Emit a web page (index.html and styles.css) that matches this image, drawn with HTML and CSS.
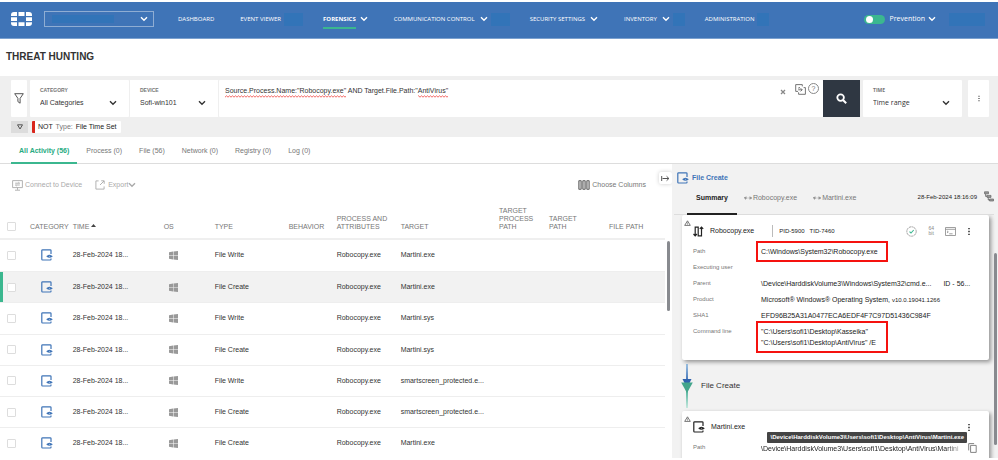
FILE: index.html
```html
<!DOCTYPE html>
<html lang="en">
<head>
    <meta charset="UTF-8">
    <meta name="viewport" content="width=device-width, initial-scale=1.0">
    <title>Threat Hunting</title>
    <link rel="stylesheet" href="styles.css">
</head>
<body>
    <svg class="sprite" aria-hidden="true">
        <symbol id="chevron" viewBox="0 0 8 6"><path d="M1 1.2l3 3 3-3" fill="none" stroke="currentColor" stroke-width="1.4"/></symbol>
        <symbol id="file" viewBox="0 0 12 12">
            <path d="M10 5V1.6a.8.8 0 0 0-.8-.8H1.6a.8.8 0 0 0-.8.8v8.6a.8.8 0 0 0 .8.8h7.6a.8.8 0 0 0 .8-.8V9.6" fill="none" stroke="currentColor" stroke-width="1.2"/>
            <path d="M5.2 7.3Q8.4 4.2 11.8 7.3Q8.4 10.4 5.2 7.3Z" fill="currentColor"/>
            <circle cx="8.5" cy="7.3" r=".5" fill="#fff" fill-opacity=".6"/>
        </symbol>
        <symbol id="windows" viewBox="0 0 9 9"><path d="M0 1.2L4 .6v3.7H0zM4.5.5L9 0v4.3H4.5zM0 4.8h4v3.6l-4-.6zM4.5 4.8H9V9l-4.5-.6z" fill="currentColor"/></symbol>
        <symbol id="dots" viewBox="0 0 4 10"><path d="M1.2 1h1.6v1.6H1.2zM1.2 4.2h1.6v1.6H1.2zM1.2 7.4h1.6V9H1.2z" fill="currentColor"/></symbol>
        <symbol id="link" viewBox="0 0 8 6"><path d="M.5 3h2.8M4.7 3h2.8M2 1.6L.6 3 2 4.4M6 1.6L7.4 3 6 4.4" fill="none" stroke="currentColor" stroke-width=".9"/></symbol>
        <symbol id="warn" viewBox="0 0 7 6"><path d="M3.5.8L6.3 5.4H.7z" fill="none" stroke="currentColor" stroke-width=".8"/><path d="M3.5 2.4v1.4M3.5 4.2v.6" stroke="currentColor" stroke-width=".6"/></symbol>
    </svg>

    <header class="topbar">
        <svg class="logo" viewBox="0 0 21 14" role="img" aria-label="Logo">
            <path fill="#fff" d="M3 0h3v4H0V3a3 3 0 0 1 3-3zM7.5 0h6v4h-6zM15 0h3a3 3 0 0 1 3 3v1h-6zM0 5.2h6v3.8H0zM15 5.2h6v3.8h-6zM0 10.2h6V14H3a3 3 0 0 1-3-3zM7.5 10.2h6V14h-6zM15 10.2h6v.8a3 3 0 0 1-3 3h-3z"/>
        </svg>
        <div class="account">
            <select aria-label="Organization"><option></option></select>
            <span class="mask"></span>
            <svg class="chevron"><use href="#chevron"/></svg>
        </div>
        <nav class="menu">
            <a href="#">DASHBOARD</a>
            <a href="#">EVENT VIEWER<span class="mask"></span></a>
            <a href="#" class="active"><span>FORENSICS</span><svg class="chevron"><use href="#chevron"/></svg></a>
            <a href="#">COMMUNICATION CONTROL<svg class="chevron"><use href="#chevron"/></svg><span class="mask"></span></a>
            <a href="#">SECURITY SETTINGS<svg class="chevron"><use href="#chevron"/></svg></a>
            <a href="#">INVENTORY<svg class="chevron"><use href="#chevron"/></svg><span class="mask small"></span></a>
            <a href="#">ADMINISTRATION<span class="mask small"></span></a>
        </nav>
        <label class="prevention">
            <input type="checkbox" class="switch" checked>
            Prevention
            <svg class="chevron"><use href="#chevron"/></svg>
        </label>
        <span class="mask user"></span>
    </header>

    <h1>THREAT HUNTING</h1>

    <section class="filters">
        <div class="filter-row">
            <button type="button" class="box funnel" aria-label="Filters">
                <svg width="10" height="11" viewBox="0 0 10 11"><path d="M.7.7h8.6L6.1 5.4v4.8L3.9 8.6V5.4z" fill="none" stroke="#555" stroke-width="1"/></svg>
            </button>
            <div class="box field category">
                <label for="category">CATEGORY</label>
                <select id="category"><option>All Categories</option></select>
                <svg class="chevron"><use href="#chevron"/></svg>
            </div>
            <div class="box field device">
                <label for="device">DEVICE</label>
                <select id="device"><option>Sofi-win101</option></select>
                <svg class="chevron"><use href="#chevron"/></svg>
            </div>
            <div class="box query">
                <div class="query-text">
                    <input type="text" aria-label="Search query" spellcheck="false" value='Source.Process.Name:"Robocopy.exe" AND Target.File.Path:"AntiVirus"'>
                    <!-- spelling marks -->
                    <svg class="squiggle" width="236" height="3">
                        <pattern id="wave" width="3" height="3" patternUnits="userSpaceOnUse"><path d="M0 2.2L1.5.8 3 2.2" fill="none" stroke="#f0413c" stroke-width=".8"/></pattern>
                        <rect width="121" height="3" fill="url(#wave)"/>
                        <rect x="193" width="30" height="3" fill="url(#wave)"/>
                    </svg>
                </div>
                <button type="button" class="icon" aria-label="Clear"><svg width="6" height="6" viewBox="0 0 6 6"><path d="M1 1l4 4M5 1L1 5" stroke="#888" stroke-width="1.3"/></svg></button>
                <button type="button" class="icon save" aria-label="Load query"><svg width="11" height="11" viewBox="0 0 11 11"><path d="M3 7.4H.7V.6h6.6v1.8M5 3.6H3.8v1M3.6 8.3v2H10.4V3.6H8.6M3.2 5.8h4M5.6 4.2l1.6 1.6-1.6 1.6" fill="none" stroke="#666" stroke-width=".9"/></svg></button>
                <button type="button" class="icon help" aria-label="Help">?</button>
            </div>
            <button type="button" class="search" aria-label="Search">
                <svg width="11" height="11" viewBox="0 0 11 11"><circle cx="4.6" cy="4.6" r="3.3" fill="none" stroke="#fff" stroke-width="1.8"/><path d="M7 7l3.2 3.2" stroke="#fff" stroke-width="2"/></svg>
            </button>
            <div class="box field time">
                <label for="time">TIME</label>
                <select id="time"><option>Time range</option></select>
                <svg class="chevron"><use href="#chevron"/></svg>
            </div>
            <button type="button" class="box more" aria-label="More"><svg width="4" height="7"><use href="#dots"/></svg></button>
        </div>
        <div class="chip-row">
            <button type="button" class="toggle-chips" aria-label="Toggle conditions"><svg width="6" height="6" viewBox="0 0 6 6"><path d="M.5.8h5L3 5z" fill="none" stroke="#555" stroke-width="1"/></svg></button>
            <span class="chip">NOT <em>Type:</em> File Time Set</span>
        </div>
    </section>

    <nav class="tabs">
        <a href="#" class="active">All Activity (56)</a>
        <a href="#">Process (0)</a>
        <a href="#">File (56)</a>
        <a href="#">Network (0)</a>
        <a href="#">Registry (0)</a>
        <a href="#">Log (0)</a>
    </nav>

    <main>
        <section class="activity">
            <div class="toolbar">
                <button type="button"><svg width="11" height="11" viewBox="0 0 11 11"><path d="M.6.6h9.8v7H.6zM5.5 7.6v2.2M3 10.2h5M3.2 3.2h4.4L6.4 2.2M7.8 5H3.4l1.2 1" fill="none" stroke="#aaa" stroke-width=".9"/></svg>Connect to Device</button>
                <button type="button"><svg width="11" height="10" viewBox="0 0 11 10"><path d="M3.6.9H.9v8.2h8.2V6.4M5 5L9 1M6.2.8h3v3" fill="none" stroke="#aaa" stroke-width=".9"/></svg>Export<svg class="chevron"><use href="#chevron"/></svg></button>
                <button type="button" class="choose"><svg width="12" height="10" viewBox="0 0 12 10"><path d="M.8.7h2.4v8.6H.8zM4.8.7h2.4v8.6H4.8zM8.8.7h2.4v8.6H8.8z" fill="#ccc" stroke="#666" stroke-width="1"/></svg>Choose Columns</button>
            </div>
            <button type="button" class="collapse" aria-label="Collapse panel"><svg width="9" height="7" viewBox="0 0 9 7"><path d="M.7 1v5M1.5 3.5h6.3M5.6 1.3l2.3 2.2-2.3 2.2" fill="none" stroke="#555" stroke-width="1"/></svg></button>
            <div class="table-wrap">
                <table>
                    <colgroup>
                        <col class="c-check"><col class="c-category"><col class="c-time"><col class="c-os"><col class="c-type"><col class="c-behavior"><col class="c-process"><col><col class="c-tprocess"><col class="c-tpath"><col class="c-fpath">
                    </colgroup>
                    <thead>
                        <tr>
                            <th><input type="checkbox" aria-label="Select all"></th>
                            <th>CATEGORY</th>
                            <th>TIME <svg width="5" height="3" viewBox="0 0 5 3"><path d="M0 3L2.5 0 5 3z" fill="#444"/></svg></th>
                            <th>OS</th>
                            <th>TYPE</th>
                            <th>BEHAVIOR</th>
                            <th>PROCESS AND ATTRIBUTES</th>
                            <th>TARGET</th>
                            <th>TARGET PROCESS PATH</th>
                            <th>TARGET<br>PATH</th>
                            <th>FILE PATH</th>
                        </tr>
                    </thead>
                    <tbody>
                        <tr>
                            <td><input type="checkbox" aria-label="Select row"></td>
                            <td><svg class="file"><use href="#file"/></svg></td>
                            <td>28-Feb-2024 18...</td>
                            <td><svg class="windows"><use href="#windows"/></svg></td>
                            <td>File Write</td><td></td><td>Robocopy.exe</td><td>Martini.exe</td><td></td><td></td><td></td>
                        </tr>
                        <tr class="selected">
                            <td><input type="checkbox" aria-label="Select row"></td>
                            <td><svg class="file"><use href="#file"/></svg></td>
                            <td>28-Feb-2024 18...</td>
                            <td><svg class="windows"><use href="#windows"/></svg></td>
                            <td>File Create</td><td></td><td>Robocopy.exe</td><td>Martini.exe</td><td></td><td></td><td></td>
                        </tr>
                        <tr>
                            <td><input type="checkbox" aria-label="Select row"></td>
                            <td><svg class="file"><use href="#file"/></svg></td>
                            <td>28-Feb-2024 18...</td>
                            <td><svg class="windows"><use href="#windows"/></svg></td>
                            <td>File Write</td><td></td><td>Robocopy.exe</td><td>Martini.sys</td><td></td><td></td><td></td>
                        </tr>
                        <tr>
                            <td><input type="checkbox" aria-label="Select row"></td>
                            <td><svg class="file"><use href="#file"/></svg></td>
                            <td>28-Feb-2024 18...</td>
                            <td><svg class="windows"><use href="#windows"/></svg></td>
                            <td>File Create</td><td></td><td>Robocopy.exe</td><td>Martini.sys</td><td></td><td></td><td></td>
                        </tr>
                        <tr>
                            <td><input type="checkbox" aria-label="Select row"></td>
                            <td><svg class="file"><use href="#file"/></svg></td>
                            <td>28-Feb-2024 18...</td>
                            <td><svg class="windows"><use href="#windows"/></svg></td>
                            <td>File Write</td><td></td><td>Robocopy.exe</td><td>smartscreen_protected.e...</td><td></td><td></td><td></td>
                        </tr>
                        <tr>
                            <td><input type="checkbox" aria-label="Select row"></td>
                            <td><svg class="file"><use href="#file"/></svg></td>
                            <td>28-Feb-2024 18...</td>
                            <td><svg class="windows"><use href="#windows"/></svg></td>
                            <td>File Create</td><td></td><td>Robocopy.exe</td><td>smartscreen_protected.e...</td><td></td><td></td><td></td>
                        </tr>
                        <tr>
                            <td><input type="checkbox" aria-label="Select row"></td>
                            <td><svg class="file"><use href="#file"/></svg></td>
                            <td>28-Feb-2024 18...</td>
                            <td><svg class="windows"><use href="#windows"/></svg></td>
                            <td>File Create</td><td></td><td>Robocopy.exe</td><td>Martini.exe</td><td></td><td></td><td></td>
                        </tr>
                    </tbody>
                </table>
                <div class="thumb"></div>
            </div>
        </section>

        <aside class="details">
            <h2><svg class="file"><use href="#file"/></svg>File Create</h2>
            <div class="detail-tabs">
                <a href="#" class="active">Summary</a>
                <a href="#"><svg class="link"><use href="#link"/></svg>Robocopy.exe</a>
                <a href="#"><svg class="link"><use href="#link"/></svg>Martini.exe</a>
                <time>28-Feb-2024 18:16:09</time>
                <svg class="tree" width="10" height="11" viewBox="0 0 10 11"><path d="M.5.8h4v2h-4zM3 4.4h4v2H3zM5.5 8h4v2h-4zM1.6 2.8v2.6H3M4.2 6.4V9h1.3" fill="#999" stroke="#666" stroke-width=".7"/></svg>
            </div>
            <div class="cards">
                <article class="card">
                    <svg class="warn"><use href="#warn"/></svg>
                    <div class="card-head">
                        <svg width="11" height="11" viewBox="0 0 11 11"><path d="M2.2 9.5V1.2h3v8.6h3.3V2M.5 8L2.2 9.8 3.9 8M6.8 2.8L8.5 1l1.7 1.8" fill="none" stroke="#222" stroke-width="1.2"/></svg>
                        <h3>Robocopy.exe</h3>
                        <span class="ids"><span>PID-5900</span><span>TID-7460</span></span>
                        <span class="badges">
                            <svg width="11" height="11" viewBox="0 0 11 11"><circle cx="5.5" cy="5.5" r="4.7" fill="none" stroke="#999" stroke-width=".9" stroke-dasharray="2.2 .5"/><path d="M3.5 5.6L5 7l2.7-3" fill="none" stroke="#3bb78f" stroke-width="1.1"/></svg>
                            <span class="bits">64<br>bit</span>
                            <svg width="11" height="9" viewBox="0 0 11 9"><path d="M.5.5h10v8H.5zM.5 2.3h10M2 3.9l1.3 1L2 6M4.2 6.8h3.4" fill="none" stroke="#888" stroke-width=".8"/></svg>
                            <button type="button" class="icon" aria-label="More"><svg width="4" height="9"><use href="#dots"/></svg></button>
                        </span>
                    </div>
                    <dl>
                        <dt>Path</dt><dd><mark>C:\Windows\System32\Robocopy.exe</mark></dd>
                        <dt>Executing user</dt><dd></dd>
                        <dt>Parent</dt><dd class="parent"><span>\Device\HarddiskVolume3\Windows\System32\cmd.e...</span><span>ID - 56...</span></dd>
                        <dt>Product</dt><dd>Microsoft® Windows® Operating System, <small>v10.0.19041.1266</small></dd>
                        <dt>SHA1</dt><dd>EFD96B25A31A0477ECA6EDF4F7C97D51436C984F</dd>
                        <dt>Command line</dt><dd><mark>"C:\Users\sofi1\Desktop\Kasseika"<br>"C:\Users\sofi1\Desktop\AntiVirus" /E</mark></dd>
                    </dl>
                </article>
                <div class="connector">
                    <svg width="12" height="44" viewBox="0 0 12 44"><defs><linearGradient id="up" x2="0" y2="1"><stop offset="0" stop-color="#9dc3e4"/><stop offset="1" stop-color="#2f62ad"/></linearGradient><linearGradient id="down" x2="0" y2="1"><stop offset="0" stop-color="#35a58b"/><stop offset="1" stop-color="#c5e8de"/></linearGradient></defs><path d="M5 0h2v20H5z" fill="url(#up)"/><path d="M5 22h2v22H5z" fill="url(#down)"/><path d="M1.5 15h9L6 24z" fill="#2f62ad"/><path d="M.2 18.5h11.6L6 29z" fill="#43a58b"/></svg>
                    File Create
                </div>
                <article class="card last">
                    <svg class="warn"><use href="#warn"/></svg>
                    <div class="card-head">
                        <svg class="file"><use href="#file"/></svg>
                        <h3>Martini.exe</h3>
                        <span class="badges"><button type="button" class="icon" aria-label="More"><svg width="4" height="9"><use href="#dots"/></svg></button></span>
                    </div>
                    <dl>
                        <dt>Path</dt><dd class="copyable"><span>\Device\HarddiskVolume3\Users\sofi1\Desktop\AntiVirus\Martini</span><button type="button" class="icon" aria-label="Copy"><svg width="9" height="10" viewBox="0 0 9 10"><path d="M2.6 2.4h5.6v7H2.6zM.7 7.4V.6h5.4" fill="none" stroke="#777" stroke-width=".9"/></svg></button></dd>
                    </dl>
                    <div class="tooltip" role="tooltip">\Device\HarddiskVolume3\Users\sofi1\Desktop\AntiVirus\Martini.exe</div>
                </article>
            </div>
            <div class="thumb"></div>
        </aside>
    </main>
</body>
</html>
```
FILE: styles.css
```css
* {
    box-sizing: border-box;
}
body {
    display: flex;
    flex-direction: column;
    height: 100vh;
    margin: 0;
    padding: 2px 0;
    overflow: hidden;
    background: #fff;
    color: #333;
    font: 7px/10px "Liberation Sans", Arial, sans-serif;
}
a {
    color: inherit;
    text-decoration: none;
}
button, select, input {
    margin: 0;
    padding: 0;
    border: 0;
    background: none;
    color: inherit;
    font: inherit;
}
button {
    display: flex;
    align-items: center;
    justify-content: center;
    cursor: pointer;
}
select {
    appearance: none;
}
svg {
    flex: none;
}
.sprite {
    position: absolute;
    width: 0;
    height: 0;
}
.chevron {
    width: 8px;
    height: 6px;
}
.file {
    width: 12px;
    height: 12px;
    color: #3f74b7;
}

/* top bar */
.topbar {
    display: flex;
    align-items: center;
    flex: none;
    height: 37px;
    padding: 0 13px 2px 11px;
    background: #3f74b7;
    border-bottom: 1px solid #7ba1d0;
    color: #fff;
    font: 6px/10px "Open Sans", sans-serif;
}
.logo {
    width: 21px;
    height: 14px;
}
.mask {
    width: 19px;
    height: 13px;
    background: #3274b8;
}
.mask.small {
    width: 12px;
}
.account {
    display: flex;
    align-items: center;
    position: relative;
    width: 110px;
    height: 16px;
    margin-left: 12px;
    padding: 0 5px 0 7px;
    border: 1px solid #8fadd3;
}
.account select {
    position: absolute;
    inset: 0;
    width: 100%;
}
.account .mask {
    width: 62px;
    height: 8px;
}
.account .chevron {
    margin-left: auto;
}
.menu {
    display: flex;
    gap: 26px;
    margin-left: 24px;
}
.menu a {
    display: flex;
    align-items: center;
    height: 13px;
    white-space: nowrap;
}
.menu .chevron {
    margin-left: 5px;
}
.menu .mask {
    margin: 0 -6px 0 3px;
}
.menu .active {
    font-weight: bold;
}
.menu .active span {
    line-height: 16px;
    margin-top: 2px;
    border-bottom: 2px solid #3bb78f;
}
.menu .active .chevron {
    margin-left: 4px;
}
.prevention {
    display: flex;
    align-items: center;
    gap: 5px;
    margin-left: auto;
    font-size: 7px;
}
.prevention .chevron {
    margin-left: -2px;
}
.switch {
    appearance: none;
    width: 21px;
    height: 9px;
    padding: 1px 2px;
    border-radius: 5px;
    background: #3bb78f;
}
.switch::before {
    content: "";
    display: block;
    width: 7px;
    height: 7px;
    border-radius: 50%;
    background: #fff;
}
.mask.user {
    width: 36px;
    margin-left: 13px;
}

h1 {
    flex: none;
    margin: 0;
    padding: 11px 6px 12px;
    font-size: 10px;
    line-height: 14px;
}

/* filters */
.filters {
    flex: none;
    height: 61px;
    padding: 4px 9px 4px 11px;
    background: #efefef;
}
.filter-row {
    display: flex;
    height: 37px;
}
.box {
    background: #fff;
    border-radius: 1px;
}
.funnel {
    width: 16px;
    margin-right: 3px;
}
.field {
    position: relative;
    padding: 6px 10px;
}
.field label {
    display: block;
    color: #777;
    font-size: 5px;
    line-height: 8px;
    font-weight: bold;
}
.field select {
    width: 100%;
    margin-top: 4px;
    line-height: 10px;
}
.field .chevron {
    position: absolute;
    right: 12px;
    bottom: 11px;
    pointer-events: none;
}
.category {
    width: 99px;
}
.device {
    width: 90px;
    border-left: 1px solid #efefef;
    border-right: 1px solid #efefef;
}
.query {
    display: flex;
    align-items: flex-start;
    flex: 1;
    gap: 2px;
    padding: 2px 4px 0 6px;
}
.query-text {
    position: relative;
    flex: 1;
    padding-top: 4px;
}
.query-text input {
    display: block;
    width: 100%;
    height: 10px;
    outline: 0;
}
.squiggle {
    position: absolute;
    left: 0;
    top: 13px;
}
.icon {
    height: 12px;
}
.query .icon {
    margin-top: 1px;
}
.query .icon.save {
    margin-left: 7px;
}
.query .help {
    width: 11px;
    height: 11px;
    border: 1px solid #888;
    border-radius: 50%;
    color: #777;
}
.query .icon:first-of-type {
    margin-top: 4px;
}
.search {
    width: 37px;
    margin-right: 3px;
    background: #2f3742;
}
.time {
    width: 99px;
    margin-right: 6px;
    font-family: "Open Sans", sans-serif;
}
.more {
    width: 21px;
}
.chip-row {
    display: flex;
    gap: 4px;
    margin-top: 4px;
}
.toggle-chips {
    width: 17px;
    height: 12px;
    background: #dcdcdc;
}
.chip {
    padding: 1px 4px 1px 3px;
    border-left: 3px solid #d9261c;
    border-radius: 1px;
    background: #fff;
    color: #222;
}
.chip em {
    margin: 0 1px;
    color: #777;
    font-style: normal;
}

/* tabs */
.tabs {
    display: flex;
    flex: none;
    gap: 17px;
    height: 27px;
    padding-left: 11px;
    border-bottom: 1px solid #ddd;
    color: #777;
}
.tabs a {
    height: 27px;
    padding-top: 9px;
}
.tabs .active {
    margin-right: -8px;
    padding: 9px 8px 0;
    border-bottom: 2px solid #3bb78f;
    color: #27ab82;
    font-weight: bold;
}

main {
    display: flex;
    flex: 1;
    min-height: 0;
}

/* activity list */
.activity {
    display: flex;
    flex-direction: column;
    flex: 1;
    position: relative;
    min-width: 0;
}
.toolbar {
    display: flex;
    align-items: center;
    flex: none;
    gap: 13px;
    height: 40px;
    padding: 2px 26px 0 12px;
    color: #aaa;
}
.toolbar button {
    gap: 2px;
}
.toolbar .chevron {
    margin-left: -2px;
}
.toolbar .choose {
    margin-left: auto;
    color: #777;
}
.collapse {
    position: absolute;
    right: 0;
    top: 8px;
    width: 13px;
    height: 12px;
    border-radius: 2px;
    background: #fff;
    box-shadow: 0 0 4px rgba(0, 0, 0, 0.2);
}
.table-wrap {
    display: flex;
    flex: 1;
    min-height: 0;
    padding-right: 2px;
}
table {
    flex: 1;
    height: 100%;
    table-layout: fixed;
    border-collapse: collapse;
}
.c-check { width: 26px; }
.c-category { width: 42px; }
.c-time { width: 91px; }
.c-os { width: 51px; }
.c-type { width: 74px; }
.c-behavior { width: 48px; }
.c-process { width: 64px; }
.c-tprocess { width: 50px; }
.c-tpath { width: 60px; }
.c-fpath { width: 60px; }
th {
    height: 35px;
    padding: 0 0 7px 4px;
    border-bottom: 2px solid #efefef;
    color: #777;
    font-weight: normal;
    line-height: 8px;
    text-align: left;
    vertical-align: bottom;
}
th svg {
    vertical-align: 2px;
}
td {
    padding: 0 0 0 4px;
    border-bottom: 1px solid #eee;
    white-space: nowrap;
}
td svg {
    display: block;
}
td .file {
    margin-left: 11px;
}
tr:last-child td {
    border-bottom: 0;
}
.windows {
    width: 9px;
    height: 9px;
    margin-left: 5px;
    color: #999;
}
table input {
    appearance: none;
    display: block;
    width: 9px;
    height: 9px;
    margin-left: 3px;
    border: 1px solid #ddd;
    border-radius: 1px;
    background: #fff;
}
.selected {
    background: #f2f2f2;
}
.selected td:first-child {
    box-shadow: inset 3px 0 #3bb78f;
}
.thumb {
    width: 3px;
    border-radius: 2px;
    background: #888a8f;
}
.table-wrap .thumb {
    height: 70px;
    margin: 37px 0 0 2px;
}

/* details panel */
.details {
    display: flex;
    flex-direction: column;
    position: relative;
    width: 326px;
    background: #f2f2f2;
}
h2 {
    display: flex;
    align-items: center;
    gap: 3px;
    margin: 0;
    padding: 8px 5px 0;
    color: #3f74b7;
    font-size: 7px;
    line-height: 12px;
}
.detail-tabs {
    display: flex;
    align-items: flex-start;
    flex: none;
    gap: 16px;
    height: 31px;
    margin: 0 4px 0 2px;
    padding-left: 13px;
    border-bottom: 1px solid #ddd;
    color: #777;
}
.detail-tabs a {
    display: flex;
    align-items: center;
    gap: 1px;
    height: 31px;
    padding-bottom: 4px;
}
.detail-tabs .active {
    margin-right: -9px;
    padding: 0 9px 2px;
    border-bottom: 2px solid #222;
    color: #222;
    font-weight: bold;
}
.link {
    width: 8px;
    height: 6px;
}
.detail-tabs time {
    margin: 8px -9px 0 auto;
    color: #222;
    font-size: 6px;
}
.tree {
    margin-top: 7px;
}
.cards {
    flex: 1;
    min-height: 0;
    padding: 0 9px 0 10px;
    overflow: hidden;
}
.card {
    position: relative;
    height: 145px;
    padding: 9px 12px 0 11px;
    border-radius: 2px;
    background: #fff;
    box-shadow: 2px 2px 4px rgba(0, 0, 0, 0.4);
}
.warn {
    position: absolute;
    left: 2px;
    top: 5px;
    width: 7px;
    height: 6px;
    color: #555;
}
.card-head {
    display: flex;
    align-items: center;
    gap: 6px;
    height: 14px;
    color: #222;
}
.card-head .file {
    color: #222;
}
h3 {
    margin: 0;
    font-size: 7px;
    font-weight: normal;
}
.ids {
    display: flex;
    gap: 5px;
    margin-left: 12px;
    padding-left: 6px;
    border-left: 1px solid #bbb;
    font-size: 6px;
    line-height: 12px;
}
.badges {
    display: flex;
    align-items: center;
    gap: 11px;
    margin-left: auto;
    margin-right: 6px;
}
.bits {
    color: #888;
    font-size: 5px;
    line-height: 5px;
    text-align: center;
}
dl {
    display: grid;
    grid-template-columns: 68px 1fr;
    grid-auto-rows: minmax(12px, auto);
    row-gap: 4px;
    margin: 8px 0 0;
    line-height: 11px;
}
dt {
    color: #777;
    font-size: 6px;
}
dd {
    min-width: 0;
    margin: 0;
    color: #222;
    white-space: nowrap;
}
dd small {
    font-size: 6px;
}
mark {
    display: block;
    width: 122px;
    background: none;
    color: inherit;
    outline: 2px solid #f5120f;
    outline-offset: 3px;
}
.parent {
    display: flex;
    gap: 12px;
}
.connector {
    display: flex;
    align-items: center;
    gap: 8px;
    height: 51px;
    margin-left: -1px;
    font-size: 8px;
    color: #333;
}
.last {
    height: 60px;
}
.copyable {
    display: flex;
    align-items: center;
    gap: 2px;
}
.copyable span {
    width: 206px;
    -webkit-mask-image: linear-gradient(90deg, #000 90%, transparent);
    mask-image: linear-gradient(90deg, #000 90%, transparent);
}
.tooltip {
    position: absolute;
    right: 22px;
    top: 21px;
    padding: 0 3px;
    border-radius: 1px;
    background: #444;
    color: #fff;
    font-size: 6px;
    font-weight: bold;
    line-height: 11px;
    white-space: nowrap;
}
.details .thumb {
    position: absolute;
    right: 1px;
    top: 89px;
    bottom: 13px;
}
```
